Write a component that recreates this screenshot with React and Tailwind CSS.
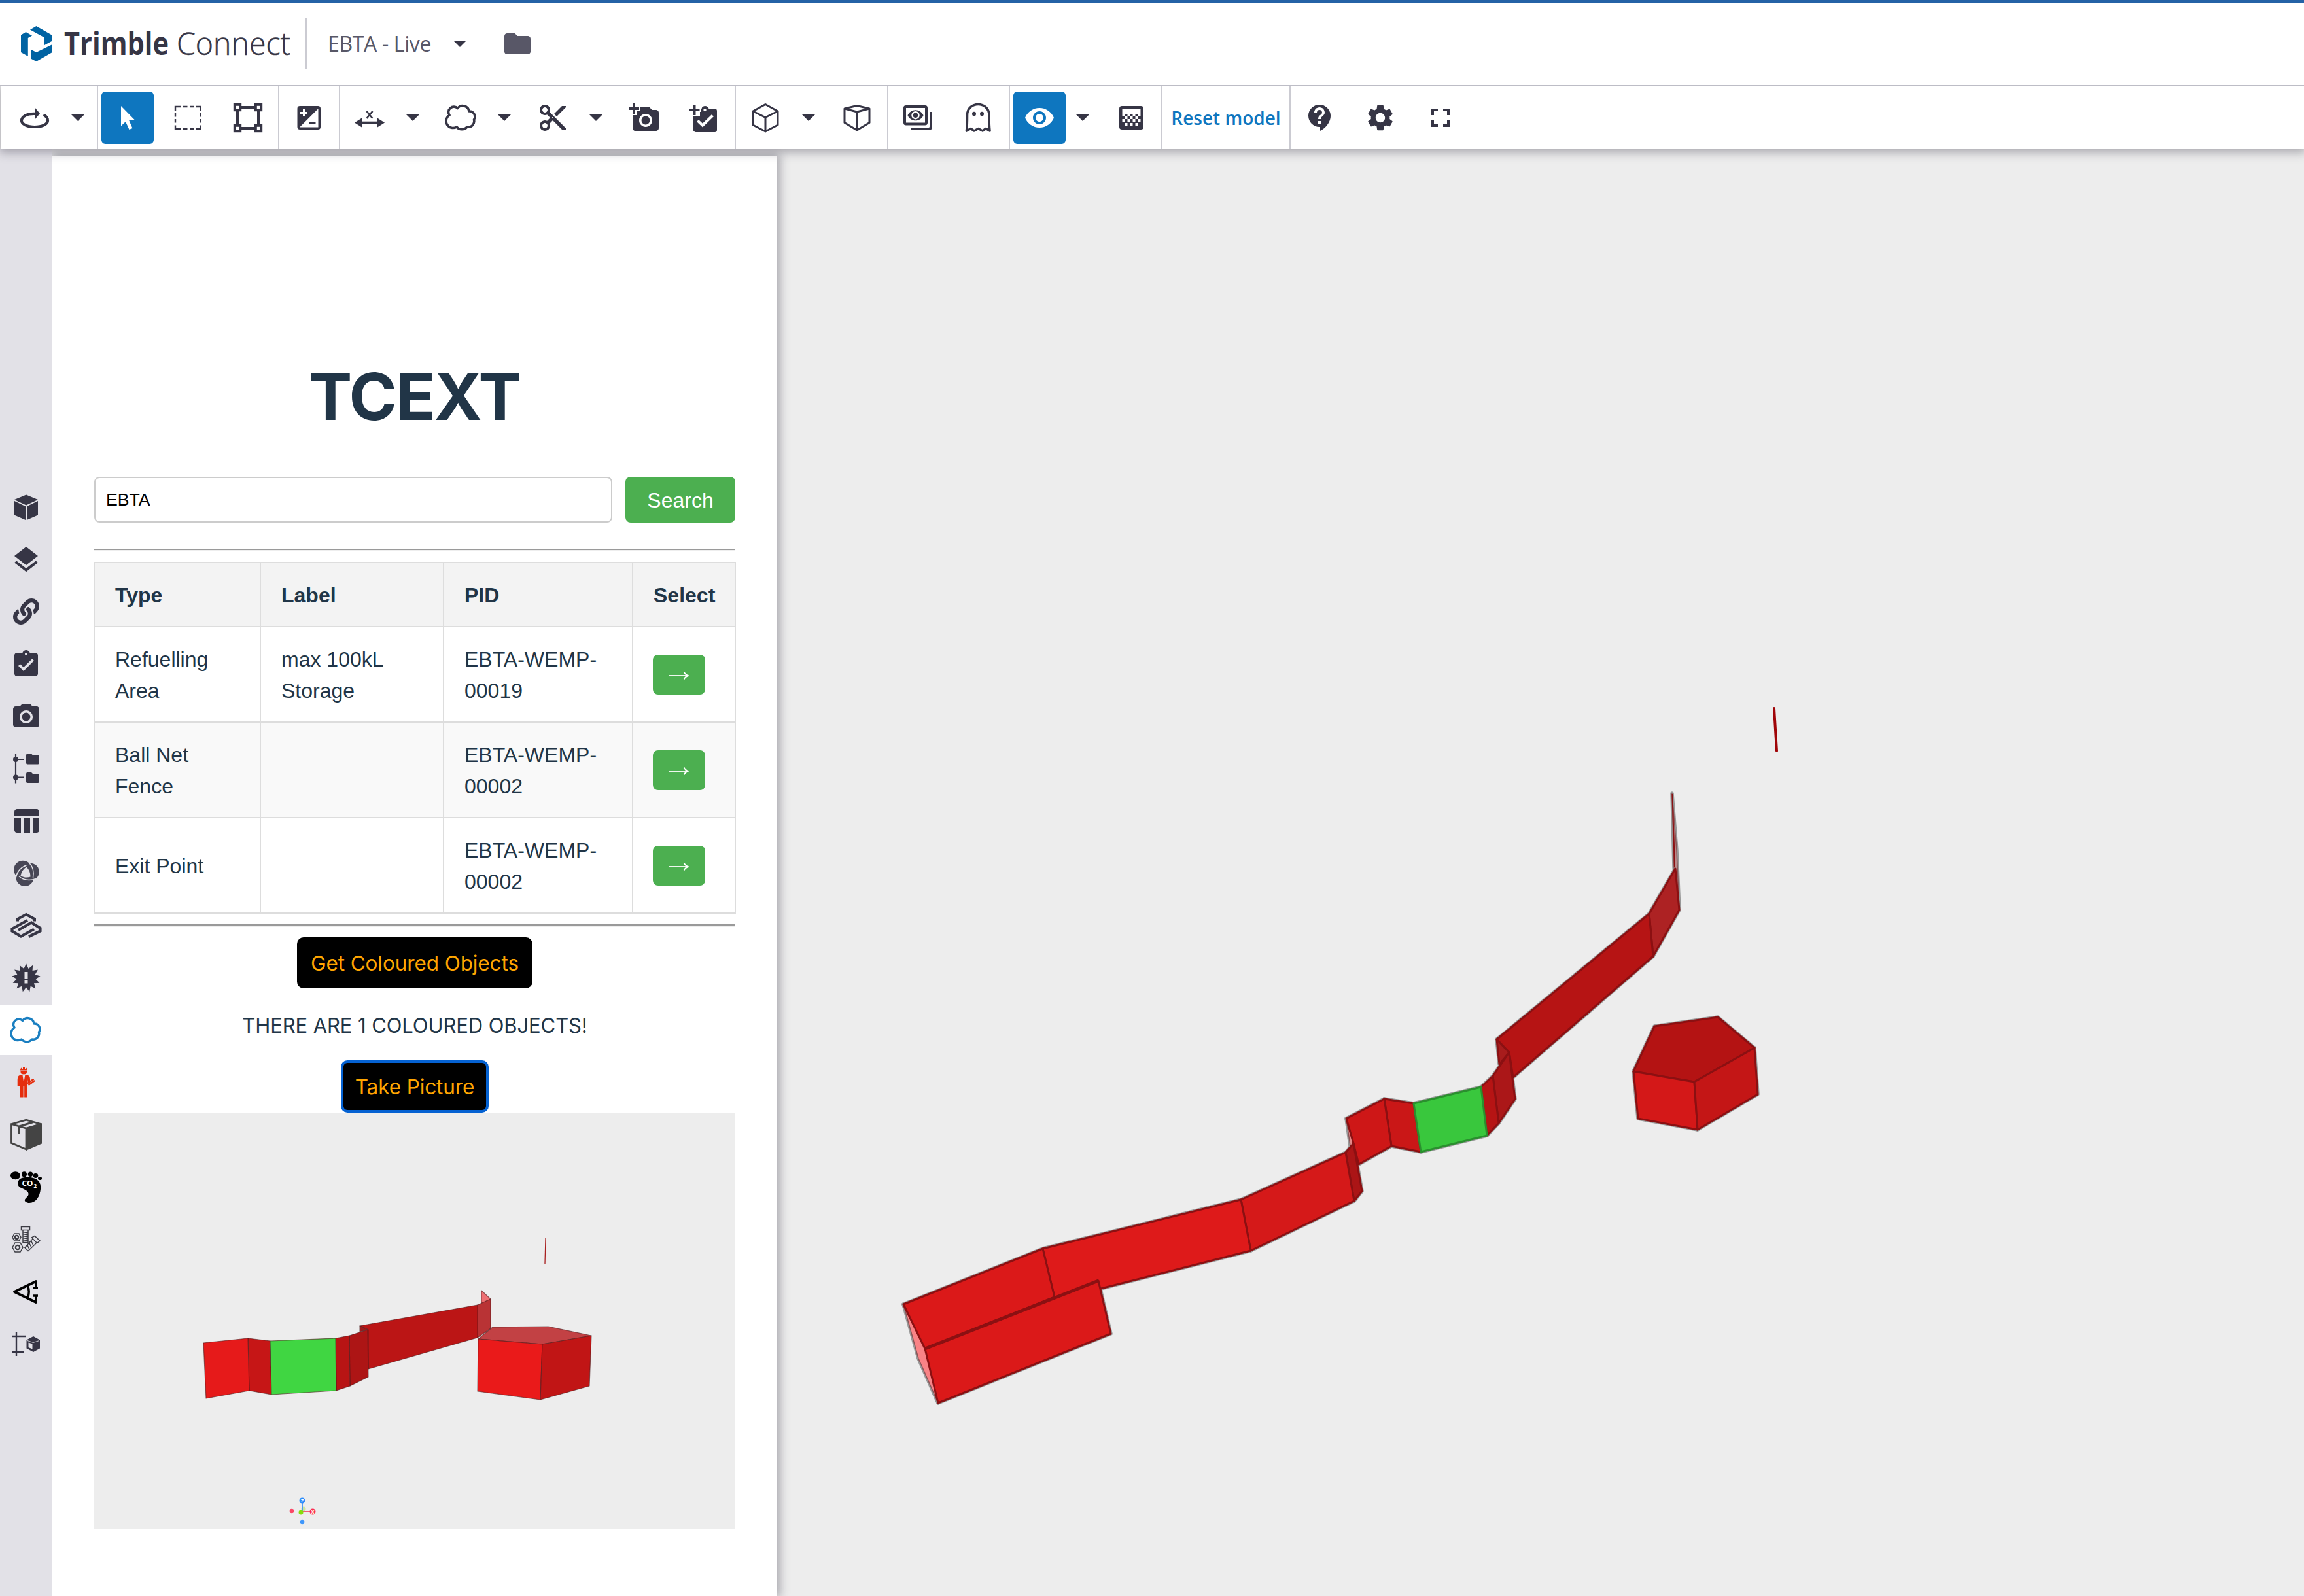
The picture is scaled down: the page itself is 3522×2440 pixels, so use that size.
import React from "react";
import {
  MdContentCut, MdAddAPhoto, MdVisibility, MdSettings, MdContactSupport, MdFullscreen,
  MdFolder, MdLayers, MdAssignmentTurnedIn, MdCameraAlt, MdTableChart,
} from "react-icons/md";
import { FaLink } from "react-icons/fa";

const CLOUD =
  "M18.5 9.5 A9.8 9.8 0 0 1 36 14 A8.4 8.4 0 0 1 43.5 27 A9 9 0 0 1 33 38 A10.5 10.5 0 0 1 17 38 A10 10 0 0 1 6 20 A8.2 8.2 0 0 1 18.5 9.5 Z";

const Svg = ({ children, className = "" }) => (
  <svg viewBox="0 0 48 48" className={"size-12 shrink-0 " + className} fill="none" stroke="none">
    {children}
  </svg>
);

/* ---------- toolbar icons ---------- */
const Rotate = () => (
  <Svg>
    <path d="M25 18 C12 17.5 4 22 4 28.5 C4 34 13 38 24 38 C35 38 44 34 44 28.5 C44 24.5 42 21.5 37.5 19.5" stroke="currentColor" strokeWidth="4.2" />
    <path d="M24 8 L32 17.5 L24 27 Z" fill="currentColor" />
  </Svg>
);
const Pointer = () => (
  <Svg>
    <path d="M14 6 L35 27.5 H26 L31.5 40 L26.5 42 L21 30 L14 36.5 Z" fill="currentColor" />
  </Svg>
);
const Marquee = () => (
  <Svg>
    <path d="M5 13V7H13 M16.500 7H23.500 M27 7H33.500 M37 7H43.500V13 M43.500 17V22.500 M43.500 26V31.500 M43.500 35.500V41H37 M33.500 41H27 M23.500 41H16.500 M13 41H5V35.500 M5 31.500V26 M5 22.500V17" stroke="currentColor" strokeWidth="2.4" />
  </Svg>
);
const Polygon = () => (
  <Svg>
    <path d="M8 8H40V40H8Z" stroke="currentColor" strokeWidth="4" />
    {[[8, 8], [40, 8], [8, 40], [40, 40]].map(([x, y]) => (
      <rect key={x + "-" + y} x={x - 4.2} y={y - 4.2} width="8.4" height="8.4" fill="#fff" stroke="currentColor" strokeWidth="4" />
    ))}
  </Svg>
);
const Exposure = () => (
  <Svg>
    <rect x="6.500" y="6" width="35.500" height="36" rx="4" fill="currentColor" />
    <path d="M38.500 10V38.500H10Z" fill="#fff" />
    <path d="M11 16.500H22 M16.500 11V22" stroke="#fff" strokeWidth="3" />
    <path d="M24 32.500H34.500" stroke="currentColor" strokeWidth="3" />
  </Svg>
);
const Measure = () => (
  <Svg>
    <path d="M19.500 14L28.500 25 M28.500 14L19.500 25" stroke="currentColor" strokeWidth="2.6" />
    <path d="M8 31.500H40" stroke="currentColor" strokeWidth="3.600" />
    <path d="M1 31.500L12 24.500V38.500Z M47 31.500L36 24.500V38.500Z" fill="currentColor" />
  </Svg>
);
const Cloud = () => (
  <Svg>
    <path d={CLOUD} stroke="currentColor" strokeWidth="3.600" strokeLinejoin="round" />
  </Svg>
);
const ClipPlus = () => (
  <Svg>
    <path d="M12 46C8.500 46 6.500 44.500 6.500 41V22H17V10H19.500C20.500 4.500 29 4.500 30.500 10H39C42 10 43 11.500 43 14V42C43 45 42 46 39 46Z" fill="currentColor" />
    <circle cx="24.500" cy="12" r="2.200" fill="#fff" />
    <path d="M13.500 28.500L21 35.500L36.500 20.500" stroke="#fff" strokeWidth="4.200" />
    <path d="M8.500 2V22 M-1 12H19" stroke="#fff" strokeWidth="6" />
    <path d="M8.500 4V20 M0.500 12H16.500" stroke="currentColor" strokeWidth="4" />
  </Svg>
);
const CubeLine = () => (
  <Svg>
    <path d="M24 3.500L43 14V35L24 45L5 35V14Z M5 14L24 23.500L43 14 M24 23.500V45" stroke="currentColor" strokeWidth="3" strokeLinejoin="round" />
  </Svg>
);
const CubeTop = () => (
  <Svg>
    <path d="M24 5.500L43 10V31.500L24 43L5 31.500V10Z M5 10L24 15L43 10 M24 15V43" stroke="currentColor" strokeWidth="3" strokeLinejoin="round" />
  </Svg>
);
const ViewLayers = () => (
  <Svg>
    <rect x="4" y="7" width="33" height="26.500" rx="2" stroke="currentColor" strokeWidth="4" />
    <path d="M8.500 20.200C13 9.500 28 9.500 32.500 20.200C28 31 13 31 8.500 20.200Z" fill="currentColor" />
    <circle cx="20.500" cy="20.200" r="5" stroke="#fff" strokeWidth="2.400" />
    <path d="M14 41H40.500Q44 41 44 37.500V15" stroke="currentColor" strokeWidth="4" />
  </Svg>
);
const Ghost = () => (
  <Svg>
    <path d="M6.500 44C7.500 36 7.500 28 7.500 20C7.500 -2 41 -2 41 20C41 28 41 36 42 44L36 40.500L31 44L24.500 40.500L18 44L13 40.500Z" stroke="currentColor" strokeWidth="3.600" strokeLinejoin="round" />
    <ellipse cx="18" cy="18" rx="3" ry="3.200" fill="currentColor" />
    <ellipse cx="30" cy="18" rx="3" ry="3.200" fill="currentColor" />
  </Svg>
);
const Gradient = () => (
  <Svg>
    <rect x="6" y="6" width="37" height="36" rx="4" fill="currentColor" />
    <rect x="10.500" y="10" width="28" height="12" fill="#fff" />
    {[14.5, 22.5, 30.5].map((x) => <rect key={x} x={x} y="18" width="4" height="4" fill="currentColor" />)}
    {[10.5, 18.5, 26.500, 34.5].map((x) => <rect key={x} x={x} y="26" width="4" height="4" fill="#fff" />)}
    {[14.5, 22.5, 30.5].map((x) => <rect key={x} x={x} y="22" width="4" height="4" fill="#fff" />)}
    {[14.5, 22.5, 30.5].map((x) => <rect key={x} x={x} y="32" width="4" height="4" fill="#fff" />)}
  </Svg>
);
const Triangle = () => (
  <svg viewBox="0 0 20 10" className="h-2.5 w-5 shrink-0" fill="currentColor">
    <path d="M0 0H20L10 10Z" />
  </svg>
);

const Cell = ({ children }) => (
  <div className="flex h-full w-[92px] shrink-0 items-center justify-center pr-0.5">{children}</div>
);
const ActiveCell = ({ children }) => (
  <Cell>
    <div className="flex size-20 shrink-0 items-center justify-center rounded-md bg-[#0e76bf] text-white">{children}</div>
  </Cell>
);
const Caret = () => (
  <div className="flex h-full w-12 shrink-0 items-center pl-[9px]">
    <Triangle />
  </div>
);
const Group = ({ className, children }) => (
  <div className={"flex h-full shrink-0 items-center border-r-2 border-[#cbcbd2] " + className}>{children}</div>
);

function Toolbar() {
  return (
    <div className="relative z-30 ml-0.5 flex h-24 shrink-0 items-center bg-white text-[#363545] shadow-[0_2px_14px_3px_rgba(54,53,69,0.38)]">
      <Group className="w-[148px] pl-1.5">
        <Cell><Rotate /></Cell>
        <Caret />
      </Group>
      <Group className="w-[277px]">
        <ActiveCell><Pointer /></ActiveCell>
        <Cell><Marquee /></Cell>
        <Cell><Polygon /></Cell>
      </Group>
      <Group className="w-[93px]">
        <Cell><Exposure /></Cell>
      </Group>
      <Group className="w-[605px]">
        <Cell><Measure /></Cell>
        <Caret />
        <Cell><Cloud /></Cell>
        <Caret />
        <Cell><MdContentCut className="size-12" /></Cell>
        <Caret />
        <Cell><MdAddAPhoto className="size-12" /></Cell>
        <Cell><ClipPlus /></Cell>
      </Group>
      <Group className="w-[233px]">
        <Cell><CubeLine /></Cell>
        <Caret />
        <Cell><CubeTop /></Cell>
      </Group>
      <Group className="w-[186px]">
        <Cell><ViewLayers /></Cell>
        <Cell><Ghost /></Cell>
      </Group>
      <Group className="w-[233px]">
        <ActiveCell><MdVisibility className="size-12" /></ActiveCell>
        <Caret />
        <Cell><Gradient /></Cell>
      </Group>
      <Group className="w-[196px] justify-center">
        <span className="whitespace-nowrap font-['Open_Sans'] text-[28px] font-semibold text-[#0e76bf]">Reset model</span>
      </Group>
      <Cell><MdContactSupport className="size-12" /></Cell>
      <Cell><MdSettings className="size-12" /></Cell>
      <Cell><MdFullscreen className="size-12" /></Cell>
    </div>
  );
}

function Header() {
  return (
    <header className="relative z-40 flex h-[132px] shrink-0 items-center border-t-4 border-b-2 border-t-[#2462a6] border-b-[#bdbdc6] bg-white pl-[30px]">
      <svg viewBox="30 38 52 58" className="h-[58px] w-[52px] shrink-0" fill="#0063a3">
        <path d="M46 45.500L55.500 40L79 53.500V63L68 69V57.500Z" />
        <path d="M32 53.500L39.500 49L49 54.500L42.800 58V86L32 80Z" />
        <path d="M48 76L55.500 80L79 68.500V80.500L55.500 94L48 90Z" />
      </svg>
      <svg viewBox="0 0 350 80" className="ml-4 h-20 w-[350px] shrink-0 overflow-visible font-['Open_Sans'] text-[48px]" fill="#363545">
        <text x="0" y="57" fontWeight="700" textLength="160" lengthAdjust="spacingAndGlyphs">Trimble</text>
        <text x="172" y="57" fontWeight="300" textLength="174" lengthAdjust="spacingAndGlyphs" stroke="#363545" strokeWidth="0.500">Connect</text>
      </svg>
      <div className="ml-[19px] h-[78px] w-0.5 bg-[#cbcbd2]" />
      <span className="ml-[32px] w-[163px] whitespace-nowrap font-['Open_Sans'] text-[32px] tracking-[-0.35px] text-[#585767]">EBTA - Live</span>
      <div className="ml-[29px] text-[#363545]"><Triangle /></div>
      <MdFolder className="ml-[54px] size-12 text-[#585767]" />
    </header>
  );
}

/* ---------- sidebar icons ---------- */
const CubeSolid = () => (
  <Svg>
    <path d="M24 5.500L42 13L24 21.500L6 13Z M6 15L23 23.300V44L6 36.500Z M42 15L25 23.300V44L42 36.500Z" fill="currentColor" />
  </Svg>
);
const Tree = () => (
  <Svg>
    <path d="M8 1.500V46.500 M8 10H20 M8 37.500H20" stroke="currentColor" strokeWidth="2.200" />
    <circle cx="8" cy="10" r="4" fill="currentColor" />
    <circle cx="8" cy="37.500" r="4" fill="currentColor" />
    <path d="M24 3.500Q24 1.500 26 1.500H32L34 3.500H42Q44 3.500 44 5.500V15.500Q44 17.500 42 17.500H26Q24 17.500 24 15.500Z" fill="currentColor" />
    <path d="M24 32Q24 30 26 30H32L34 32H42Q44 32 44 34V44Q44 46 42 46H26Q24 46 24 44Z" fill="currentColor" />
  </Svg>
);
const Rings = () => (
  <Svg className="text-[#484756]">
    <g fill="currentColor">
      <circle cx="19" cy="18.500" r="13.800" />
      <circle cx="30.500" cy="22" r="13.300" />
      <circle cx="22" cy="30.500" r="13.500" />
    </g>
    <path d="M24.500 14.500C28.500 18 30.500 23 30.500 29.500C25 31.500 19.500 30.500 15.500 28C16.500 22.500 19.500 17.500 24.500 14.500Z" fill="#e2e1e7" />
    <g stroke="#e2e1e7" strokeWidth="1.500">
      <path d="M24.500 11.800C15 15.500 9.500 23.500 8 31.500" />
      <path d="M29 8.500C34.500 14.500 36 23 34.500 31" />
      <path d="M13 28.500C18 34 28 36.500 39 32.500" />
    </g>
  </Svg>
);
const Stack = () => (
  <Svg>
    <path d="M11 17.500V14L24 7L37 14V17.500" stroke="currentColor" strokeWidth="4" />
    <path d="M26 16L2.500 29V32.500L16 40.500L36 29.500 M12 31L32 19.500L45.500 28V32.500L28 41" stroke="currentColor" strokeWidth="4.200" />
  </Svg>
);
const STAR = Array.from({ length: 26 }, (_, i) => {
  const r = i % 2 ? 14.5 : 21.8;
  const a = (Math.PI * i) / 13 - Math.PI / 2;
  return (24 + r * Math.cos(a)).toFixed(1) + "," + (24 + r * Math.sin(a)).toFixed(1);
}).join(" ");
const Clash = () => (
  <Svg>
    <polygon points={STAR} fill="currentColor" />
    <rect x="21.500" y="15" width="5" height="11" fill="#e2e1e7" />
    <rect x="21.500" y="28" width="5" height="4.500" fill="#e2e1e7" />
  </Svg>
);
const Worker = () => (
  <Svg className="text-[#e52d0d]">
    <path d="M15 5.500Q15 1.500 18 1V3.500H19V0.500H22V3.500H23V1Q25.500 1.500 25.500 5.500Z" fill="currentColor" />
    <path d="M15.500 6.500H25V8Q25 11.500 20.300 11.500Q15.500 11.500 15.500 8Z" fill="currentColor" />
    <path d="M14 13H27Q30 14 30 19V24H27V19L26 28V46.500H21.200V30H19.600V46.500H15V20L14 30H10.700V20Q10.700 14 14 13Z" fill="currentColor" />
    <path d="M18.500 13L20.300 24L22.300 13Z" fill="#e2e1e7" />
    <path d="M26 25.500L35.500 18.500M27.500 28L37 21" stroke="currentColor" strokeWidth="2.400" />
  </Svg>
);
const Carton = () => (
  <Svg className="text-[#444444]">
    <path d="M1.500 7.500L24 1.200L46.500 7.500L24 14Z M1.500 7.500V36.500L24 46V14" stroke="currentColor" strokeWidth="2.800" />
    <path d="M24 13L48 6.500V37.500L24 47.800Z" fill="currentColor" />
    <path d="M13.500 11L35 4.500" stroke="currentColor" strokeWidth="3" />
    <path d="M13.500 10V23" stroke="currentColor" strokeWidth="3" />
  </Svg>
);
const Footprint = () => (
  <Svg className="overflow-visible text-black">
    <g fill="currentColor">
      <ellipse cx="7.500" cy="6.200" rx="7.500" ry="6" />
      <circle cx="21" cy="4.300" r="4" />
      <circle cx="30.500" cy="4.300" r="3.700" />
      <ellipse cx="38.500" cy="6.500" rx="3.800" ry="3.400" />
      <ellipse cx="45" cy="10.500" rx="3" ry="2.600" />
      <path d="M11.500 17C12.500 9 22 8 31 9C42 11 47 16 46 27C45 38 39 48 29 48C24 48 21 45.500 22 43C23 40.500 28 38 27.500 34C27 29 20 27 16 25C12 23 11 20 11.500 17Z" />
    </g>
    <text x="17.500" y="21.500" fontSize="10.500" fontWeight="700" textLength="17" lengthAdjust="spacingAndGlyphs" fill="#fff" className="font-['Open_Sans']">CO</text>
    <text x="35.500" y="25" fontSize="8" fontWeight="700" fill="#fff" className="font-['Open_Sans']">2</text>
  </Svg>
);
const Bolts = () => (
  <Svg className="text-[#3c3c44]">
    <g stroke="currentColor" strokeWidth="1.500">
      <path d="M3 20.500L6 15H13L16 20.500L13 26H6Z" />
      <circle cx="9.500" cy="20.500" r="2.600" strokeWidth="2.200" />
      <path d="M3 36L7 29H15L19 36L15 43H7Z" />
      <circle cx="11" cy="36" r="3.200" strokeWidth="2.200" />
      <path d="M16.500 4.500H29.500V9.500H16.500Z" />
      <path d="M19 9.500V28.500H27V9.500 M19 12.500L27 14 M19 15.500L27 17 M19 18.500L27 20 M19 21.500L27 23 M19 24.500L27 26" />
      <path d="M32.500 21L37 18.500L45 26L40.500 29.500Z" />
      <path d="M34 23L22 36.500L27 41.500L40 29 M31.500 26L35 33 M28.500 29L32 36 M25.500 32L29 39" />
    </g>
  </Svg>
);
const SectionView = () => (
  <Svg className="text-black">
    <path d="M39 18V8L6 24L39 40V30" stroke="currentColor" strokeWidth="3.800" strokeLinejoin="round" />
    <path d="M26 14Q30.500 24 26 34" stroke="currentColor" strokeWidth="3.400" />
    <path d="M34 18H42 M34 30H42" stroke="currentColor" strokeWidth="3.400" />
  </Svg>
);
const GridCube = () => (
  <Svg>
    <path d="M9 6V42 M3 12H24 M3 36H21" stroke="currentColor" strokeWidth="2.400" />
    <path d="M24.500 17.500L35 12L45 17.500V30.500L35 36L24.500 30.500Z" fill="currentColor" />
    <path d="M27.500 21.500L33.500 23.500V31.500L27.500 29Z" fill="#e2e1e7" />
    <path d="M26 18.500L34.700 21.500L44 18.500" stroke="#e2e1e7" strokeWidth="0.900" />
  </Svg>
);

const SIDE = [
  <CubeSolid />, <MdLayers className="mt-0.5 size-12" />, <FaLink className="size-10" />, <MdAssignmentTurnedIn className="mt-0.5 size-12" />,
  <MdCameraAlt className="mt-0.5 size-12" />, <Tree />, <MdTableChart className="size-12" />, <Rings />, <Stack />, <Clash />,
  <Svg className="text-[#1a7fc1]"><path d={CLOUD} stroke="currentColor" strokeWidth="3.400" strokeLinejoin="round" /></Svg>,
  <Worker />, <Carton />, <Footprint />, <Bolts />, <SectionView />, <GridCube />,
];

function Sidebar() {
  return (
    <nav className="relative z-20 flex w-20 shrink-0 flex-col bg-[#e2e1e7] pt-[507px] text-[#363545]">
      {SIDE.map((icon, i) => (
        <div key={i} className="flex h-20 items-center py-0.5">
          <div className={"flex h-full w-full items-center justify-center " + (i === 10 ? "bg-white" : "")}>{icon}</div>
        </div>
      ))}
    </nav>
  );
}

/* ---------- extension panel ---------- */
const ROWS = [
  ["Refuelling Area", "max 100kL Storage", "EBTA-WEMP-00019"],
  ["Ball Net Fence", "", "EBTA-WEMP-00002"],
  ["Exit Point", "", "EBTA-WEMP-00002"],
];

const Rule = () => (
  <div className="h-1 w-full shrink-0 border-t-2 border-b-2 border-t-[#9a9a9a] border-b-[#eeeeee]" />
);

function Snapshot() {
  return (
    <svg viewBox="144 1701 980 637" className="h-[637px] w-[980px] shrink-0 bg-[#ededed]" strokeLinejoin="round">
      <g stroke="#4d1a1c" strokeOpacity="0.6" strokeWidth="1.200">
        <path d="M736 1973L750 1986L736 1993Z" fill="#ee7073" />
        <path d="M730 1995L750 1986V2031L730 2045Z" fill="#b93335" />
        <path d="M550 2027L730 1995V2045L563 2093V2033Z" fill="#bb1515" />
        <path d="M550 2027L562 2033L550 2036Z" fill="#a01c1c" />
        <path d="M534 2042L562 2033L563 2105L535 2119Z" fill="#ad1515" />
        <path d="M513 2046L534 2042L535 2119L514 2126Z" fill="#b81414" />
        <path d="M379 2046L413 2050L415 2132L381 2126Z" fill="#c61616" />
        <path d="M311 2053L379 2046L381 2126L315 2138Z" fill="#e61a1a" />
        <path d="M413 2050L513 2046L514 2126L415 2132Z" fill="#40d642" />
        <path d="M731 2047L753 2029L838 2028L904 2042L829 2055Z" fill="#c24144" />
        <path d="M731 2047L829 2055L826 2140L730 2127Z" fill="#ea1a1a" />
        <path d="M829 2055L904 2042L901 2119L826 2140Z" fill="#c11515" />
      </g>
      <path d="M834 1893L833 1932" stroke="#a82020" strokeWidth="1.300" />
      <circle cx="464" cy="2307" r="3.500" fill="#cbe6a0" />
      <path d="M462 2311V2296" stroke="#3f93f5" strokeWidth="1.800" />
      <path d="M462 2311H476" stroke="#f5365c" strokeWidth="1.600" />
      <circle cx="462" cy="2294" r="4.500" fill="#2e8cfb" />
      <circle cx="478" cy="2311" r="4.500" fill="#fb2e52" />
      <circle cx="446" cy="2310" r="3.300" fill="#fb4766" />
      <circle cx="462" cy="2327" r="3.300" fill="#3f97fb" />
      <circle cx="460" cy="2312" r="3.500" fill="#86dc0c" />
      <text x="462" y="2296.500" fontSize="7" fontWeight="700" textAnchor="middle" fill="#fff" className="font-['Open_Sans']">Z</text>
      <text x="478" y="2313.500" fontSize="7" fontWeight="700" textAnchor="middle" fill="#fff" className="font-['Open_Sans']">X</text>
    </svg>
  );
}

function Panel() {
  return (
    <main className="relative z-10 flex w-[1108px] shrink-0 flex-col items-center bg-white px-16 font-['Liberation_Sans'] text-[32px] leading-[48px] text-[#213547] shadow-[2px_0_14px_2px_rgba(54,53,69,0.4)]">
      <h1 className="mt-[312px] h-[112px] font-['Inter'] text-[99px] leading-[112px] font-bold tracking-[-1.6px]">TCEXT</h1>
      <div className="mt-[67px] flex w-full gap-5">
        <div className="flex h-[70px] w-[792px] items-center rounded-lg border-2 border-[#cccccc] px-4 text-[26.67px] text-black">EBTA</div>
        <div className="flex h-[70px] w-[168px] items-center justify-center rounded-lg bg-[#4caf50] pt-0.5 text-white">Search</div>
      </div>
      <div className="mt-10 w-full"><Rule /></div>
      <table className="mt-4 w-[980px] shrink-0 table-fixed border-collapse text-left text-[32px]">
        <colgroup>
          <col className="w-[254px]" />
          <col className="w-[280px]" />
          <col className="w-[289px]" />
          <col className="w-[157px]" />
        </colgroup>
        <thead>
          <tr className="h-[98px] bg-[#f3f3f3]">
            {["Type", "Label", "PID", "Select"].map((h) => (
              <th key={h} className="border-2 border-[#dddddd] py-0 pt-0.5 pr-5 pl-[31px] font-bold">{h}</th>
            ))}
          </tr>
        </thead>
        <tbody>
          {ROWS.map((r, i) => (
            <tr key={i} className={i === 1 ? "h-[146px] bg-[#f9f9f9]" : "h-[146px]"}>
              {r.map((c, j) => (
                <td key={j} className="border-2 border-[#dddddd] py-0 pt-0.5 pr-5 pl-[31px]">{c}</td>
              ))}
              <td className="border-2 border-[#dddddd] px-[30px] py-0">
                <div className="flex h-[61px] w-20 items-center justify-center rounded-lg bg-[#4caf50] text-white">
                  <svg viewBox="0 0 32 14" className="mt-1 h-3.5 w-8" fill="none" stroke="#fff">
                    <path d="M1 7H29" strokeWidth="1.800" />
                    <path d="M23.500 1.500Q26 6 30.500 7Q26 8 23.500 12.500" strokeWidth="1.800" />
                  </svg>
                </div>
              </td>
            </tr>
          ))}
        </tbody>
      </table>
      <div className="mt-4 w-full"><Rule /></div>
      <div className="mt-4 flex h-[78px] w-[360px] shrink-0 items-center justify-center rounded-[10px] bg-black pt-0.5 font-['Inter'] text-[31.5px] tracking-[-0.1px] whitespace-nowrap text-[#ffa500]">Get Coloured Objects</div>
      <p className="mt-[33px] font-['Inter'] text-[31px] tracking-[-0.1px] whitespace-nowrap">THERE ARE 1 COLOURED OBJECTS!</p>
      <div className="mt-[29px] flex h-20 w-[226px] shrink-0 items-center justify-center rounded-[10px] border-4 border-[#0562d2] bg-black pt-0.5 font-['Inter'] text-[31.5px] tracking-[-0.1px] whitespace-nowrap text-[#ffa500]">Take Picture</div>
      <Snapshot />
    </main>
  );
}

/* ---------- 3D viewport ---------- */
const FACES = [
  ["M1381 1994L1404 2077L1434 2145L1414 2062Z", "#f98386"],
  ["M2058 1710L2064 1752L2069 1748Z", "#e58a8a"],
  ["M2556 1213L2559 1326L2567 1391L2563 1300Z", "#b98a8a"],
  ["M2521 1397L2561 1328L2567 1391L2527 1462Z", "#ad2223"],
  ["M2288 1589L2521 1397L2527 1462L2313 1647L2307 1609Z", "#b61414"],
  ["M2288 1589L2307 1609L2292 1627Z", "#a81c1c"],
  ["M2282 1645L2307 1609L2316 1680L2291 1717Z", "#ab1718"],
  ["M2264 1662L2282 1645L2291 1717L2273 1736Z", "#b61414"],
  ["M2116 1680L2161 1687L2172 1761L2127 1752Z", "#ca1717"],
  ["M2058 1710L2116 1680L2127 1752L2077 1780L2069 1748Z", "#ce1717"],
  ["M2057 1762L2069 1748L2082 1821L2070 1836Z", "#ab1516"],
  ["M1897 1834L2057 1762L2070 1836L1912 1912Z", "#d51919"],
  ["M1594 1909L1897 1834L1912 1912L1683 1970L1612 1984Z", "#de1a1a"],
  ["M1381 1994L1594 1909L1612 1983L1414 2062Z", "#db1919"],
  ["M1414 2062L1679 1958L1698 2039L1434 2145Z", "#db1919"],
  ["M2497 1638L2529 1569L2626 1555L2682 1602L2590 1654Z", "#b41313"],
  ["M2497 1638L2590 1654L2595 1727L2504 1710Z", "#d41818"],
  ["M2590 1654L2682 1602L2687 1673L2595 1727Z", "#c41616"],
];

function Viewport() {
  return (
    <section className="min-w-0 flex-1">
      <svg viewBox="1188 238 2334 2202" className="block h-[2202px] w-[2334px]" strokeLinejoin="round">
        <g stroke="#999999" strokeWidth="5.500" fill="none">
          {FACES.map(([d]) => <path key={d} d={d} />)}
          <path d="M2161 1687L2264 1662L2273 1736L2172 1761Z" />
        </g>
        <g stroke="#8b1012" strokeWidth="3">
          {FACES.map(([d, fill], i) => (
            <path key={d} d={d} fill={fill} stroke={i < 3 ? "#8a5557" : "#8b1012"} strokeWidth={i < 3 ? 1.5 : 3} />
          ))}
        </g>
        <path d="M2556.500 1214L2560 1326" stroke="#8b1012" strokeWidth="2" />
        <path d="M1414 2062L1679 1958" stroke="#8b1012" strokeWidth="5" />
        <path d="M2161 1687L2264 1662L2273 1736L2172 1761Z" fill="#39c73d" stroke="#2a8f2e" strokeWidth="3" />
        <path d="M2712 1083L2716 1148" stroke="#a00508" strokeWidth="4" strokeLinecap="round" />
      </svg>
    </section>
  );
}

export default function App() {
  return (
    <div className="flex h-[2440px] w-[3522px] flex-col overflow-hidden bg-[#ededed]">
      <Header />
      <Toolbar />
      <div className="flex min-h-0 flex-1 pt-2.5">
        <div className="-mt-2.5 flex">
          <Sidebar />
        </div>
        <Panel />
        <Viewport />
      </div>
    </div>
  );
}
